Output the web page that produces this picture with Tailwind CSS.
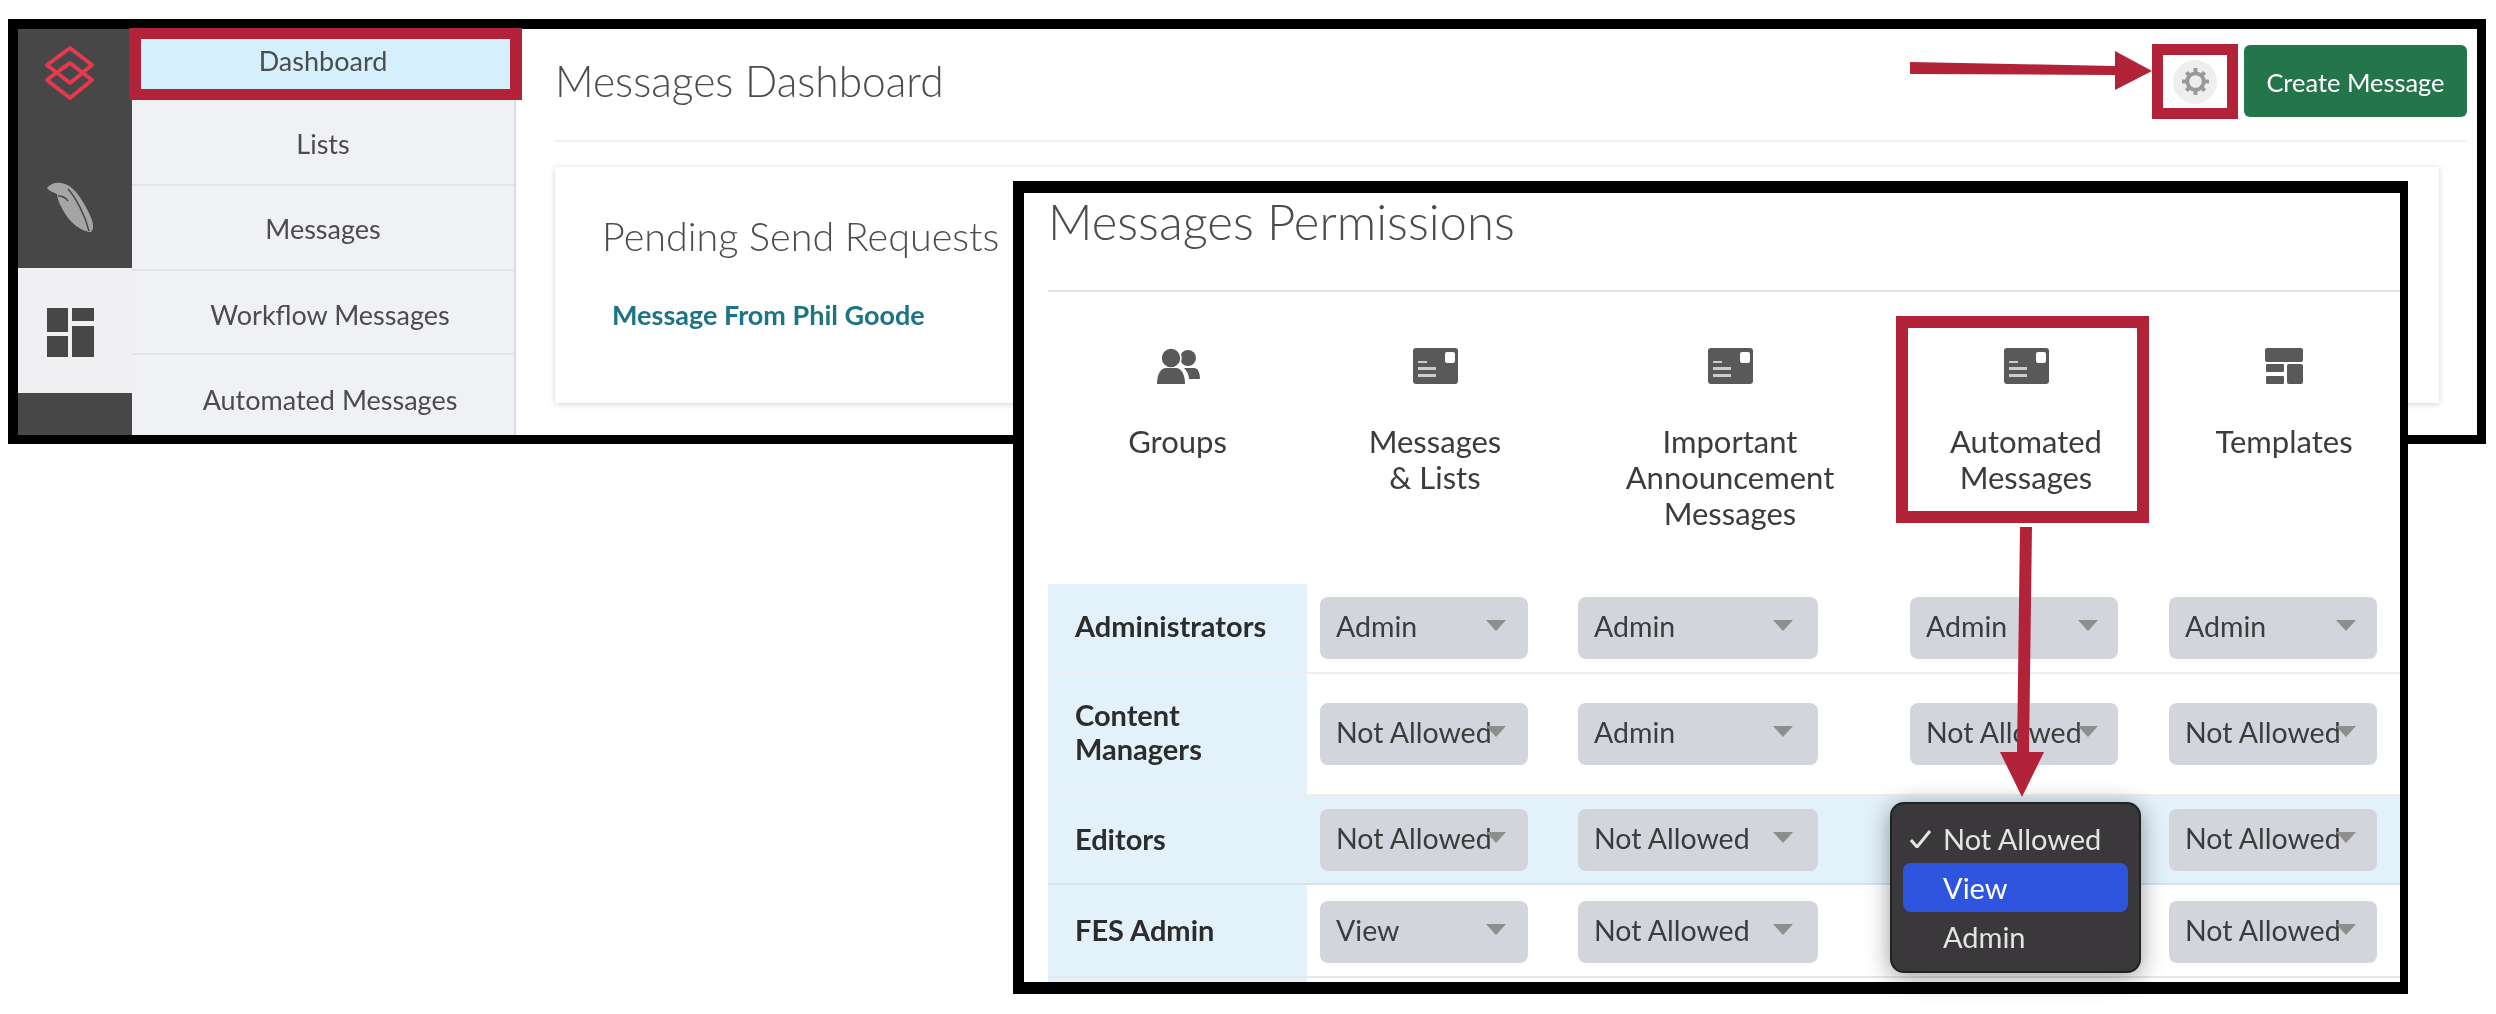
<!DOCTYPE html>
<html lang="en">
<head>
  <meta charset="UTF-8" />
  <title>Messages Dashboard</title>
  <script src="https://cdn.jsdelivr.net/npm/@tailwindcss/browser@4"></script>
</head>
<body class="bg-white">
  <div class="relative w-[2496px] h-[1014px] overflow-hidden bg-white blur-[0.7px] font-['Lato','Liberation_Sans',sans-serif] text-[#3c3c3c]">

    <!-- dashboard screenshot -->
    <div class="absolute left-[8px] top-[19px] w-[2478px] h-[425px] flex border-l-[10px] border-r-[9px] border-t-[10px] border-b-[9px] border-black bg-white">
      <!-- icon rail -->
      <div class="w-[114px] shrink-0 flex flex-col bg-[#474747]">
        <div class="h-[239px] relative">
          <svg class="absolute left-0 top-0" width="114" height="239" viewBox="18 29 114 239" fill="none">
            <path d="M82 73L92 65L70 48L47 65L70 83L80 75" stroke="#e8384f" stroke-width="4" stroke-linejoin="round" stroke-linecap="round"/>
            <path d="M57 72L47 80L70 98L92 80L70 63L60 70" stroke="#e8384f" stroke-width="4" stroke-linejoin="round" stroke-linecap="round"/>
            <path d="M47 188C50 184 55 182 61 183C70 184 77 192 83 202C89 212 94 222 93 228C92 232 90 233 89 232C80 230 72 224 66 215C60 206 57 198 57 194C53 192 49 191 47 188Z" fill="#a5a5a5"/>
            <path d="M68 189C76 198 85 215 89 231" stroke="#474747" stroke-width="1.5"/>
            <path d="M58 196C62 196 66 198 68 201" stroke="#474747" stroke-width="1.5"/>
          </svg>
        </div>
        <div class="h-[125px] bg-[#f0f0f3] relative">
          <svg class="absolute left-0 top-0" width="114" height="125" viewBox="18 268 114 125" fill="#474747">
            <rect x="47" y="308" width="21" height="24"/>
            <rect x="72" y="308" width="22" height="13"/>
            <rect x="47" y="336" width="21" height="21"/>
            <rect x="72" y="326" width="22" height="31"/>
          </svg>
        </div>
        <div class="flex-1"></div>
      </div>
      <!-- nav -->
      <div class="w-[384px] shrink-0 flex flex-col bg-[#f0f1f4] border-r-2 border-[#d8dce6] text-[27px] text-[#4c4c4c] text-center overflow-hidden">
        <div class="h-[70px] pb-[5px] flex items-center justify-center">Dashboard</div>
        <div class="h-[87px] pt-[6px] flex items-center justify-center border-b-2 border-[#e1e4ea]">Lists</div>
        <div class="h-[85px] pt-[4px] flex items-center justify-center border-b-2 border-[#e1e4ea]">Messages</div>
        <div class="h-[84px] pt-[6px] flex items-center justify-center pl-[14px] border-b-2 border-[#e1e4ea]">Workflow Messages</div>
        <div class="h-[80px] pt-[10px] flex items-center justify-center pl-[14px]">Automated Messages</div>
      </div>
      <!-- main -->
      <div class="flex-1 pl-[39px] pr-[10px]">
        <div class="h-[113px] flex items-start justify-between border-b-2 border-[#eeeff3]">
          <h1 class="mt-[28px] text-[42.5px] leading-[48px] font-light text-[#4c4c4c]">Messages Dashboard</h1>
          <button class="mt-[16px] pt-[2px] w-[223px] h-[72px] rounded-md bg-[#24744c] text-white text-[25.4px]">Create Message</button>
        </div>
        <div class="mt-[25px] mr-[28px] h-[236px] bg-white shadow-[0_1px_6px_rgba(0,0,0,0.18)] pl-[47px] pt-[47px]">
          <h2 class="text-[39.5px] leading-[44px] font-light text-[#4c4c4c]">Pending Send Requests</h2>
          <a class="block mt-[41px] ml-[10px] text-[27px] leading-[32px] font-bold text-[#1d7486]">Message From Phil Goode</a>
        </div>
      </div>
    </div>

    <!-- permissions screenshot -->
    <div class="absolute left-[1013px] top-[181px] w-[1395px] h-[813px] border-l-[11px] border-r-[8px] border-t-[12px] border-b-[12px] border-black bg-white pl-[24px] overflow-hidden">
      <div class="h-[99px] border-b-2 border-[#e2e2ea]">
        <h2 class="text-[49px] leading-[56px] font-light text-[#4c4c4c]">Messages Permissions</h2>
      </div>
      <!-- column heads -->
      <div class="h-[292px] flex pt-[56px] text-center text-[31px] leading-[36px]">
        <div class="w-[259px] shrink-0 flex flex-col items-center">
          <svg width="44" height="36" viewBox="0 0 44 36" fill="#595959">
            <circle cx="32" cy="10" r="8"/>
            <path d="M28 20H38C41 20 44 23 44 31H33C33 27 31 23 28 20Z"/>
            <circle cx="15" cy="10" r="10" stroke="#fff" stroke-width="1.5"/>
            <path d="M1 36C1 26 5 20 10 20H20C25 20 29 26 29 36Z"/>
          </svg>
          <div class="mt-[39px]">Groups</div>
        </div>
        <div class="w-[256px] shrink-0 flex flex-col items-center">
          <svg width="45" height="36" viewBox="0 0 45 36">
            <rect width="45" height="36" rx="3" fill="#595959"/>
            <rect x="32" y="4" width="10" height="11" rx="2" fill="#fff"/>
            <rect x="5" y="13" width="9" height="2" fill="#ccc"/>
            <rect x="5" y="19" width="18" height="3" fill="#ccc"/>
            <rect x="5" y="26" width="18" height="3" fill="#ccc"/>
          </svg>
          <div class="mt-[39px]">Messages<br />&amp; Lists</div>
        </div>
        <div class="w-[334px] shrink-0 flex flex-col items-center">
          <svg width="45" height="36" viewBox="0 0 45 36">
            <rect width="45" height="36" rx="3" fill="#595959"/>
            <rect x="32" y="4" width="10" height="11" rx="2" fill="#fff"/>
            <rect x="5" y="13" width="9" height="2" fill="#ccc"/>
            <rect x="5" y="19" width="18" height="3" fill="#ccc"/>
            <rect x="5" y="26" width="18" height="3" fill="#ccc"/>
          </svg>
          <div class="mt-[39px]">Important<br />Announcement<br />Messages</div>
        </div>
        <div class="w-[258px] shrink-0 flex flex-col items-center">
          <svg width="45" height="36" viewBox="0 0 45 36">
            <rect width="45" height="36" rx="3" fill="#595959"/>
            <rect x="32" y="4" width="10" height="11" rx="2" fill="#fff"/>
            <rect x="5" y="13" width="9" height="2" fill="#ccc"/>
            <rect x="5" y="19" width="18" height="3" fill="#ccc"/>
            <rect x="5" y="26" width="18" height="3" fill="#ccc"/>
          </svg>
          <div class="mt-[39px]">Automated<br />Messages</div>
        </div>
        <div class="w-[258px] shrink-0 flex flex-col items-center">
          <svg width="38" height="36" viewBox="0 0 38 36" fill="#595959">
            <rect width="38" height="14" rx="2"/>
            <rect x="1" y="16" width="18" height="8" rx="1"/>
            <rect x="1" y="28" width="18" height="8" rx="1"/>
            <rect x="22" y="16" width="16" height="20" rx="2"/>
          </svg>
          <div class="mt-[39px]">Templates</div>
        </div>
      </div>

      <!-- rows -->
      <div class="h-[90px] flex items-center border-b-2 border-[#eeeeee]">
        <div class="w-[259px] h-full shrink-0 flex items-center pb-[4px] pl-[27px] pr-4 bg-[#e3f1fb] text-[29px] leading-[34px] font-bold text-[#2c2c2c]">Administrators</div>
        <div class="relative ml-[13px] w-[208px] h-[62px] shrink-0 flex items-center pb-[4px] pl-[16px] rounded-lg bg-[#d3d5dd] text-[28.5px]">Admin<svg class="absolute right-[22px] top-[23px]" width="20" height="11" viewBox="0 0 20 11"><path d="M0 0H20L10 11Z" fill="#8e8e8e"/></svg></div>
        <div class="relative ml-[50px] w-[240px] h-[62px] shrink-0 flex items-center pb-[4px] pl-[16px] rounded-lg bg-[#d3d5dd] text-[28.5px]">Admin<svg class="absolute right-[25px] top-[23px]" width="20" height="11" viewBox="0 0 20 11"><path d="M0 0H20L10 11Z" fill="#8e8e8e"/></svg></div>
        <div class="relative ml-[92px] w-[208px] h-[62px] shrink-0 flex items-center pb-[4px] pl-[16px] rounded-lg bg-[#d3d5dd] text-[28.5px]">Admin<svg class="absolute right-[20px] top-[23px]" width="20" height="11" viewBox="0 0 20 11"><path d="M0 0H20L10 11Z" fill="#8e8e8e"/></svg></div>
        <div class="relative ml-[51px] w-[208px] h-[62px] shrink-0 flex items-center pb-[4px] pl-[16px] rounded-lg bg-[#d3d5dd] text-[28.5px]">Admin<svg class="absolute right-[21px] top-[23px]" width="20" height="11" viewBox="0 0 20 11"><path d="M0 0H20L10 11Z" fill="#8e8e8e"/></svg></div>
      </div>
      <div class="h-[122px] flex items-center border-b-2 border-[#eeeeee]">
        <div class="w-[259px] h-full shrink-0 flex items-center pb-[4px] pl-[27px] pr-4 bg-[#e3f1fb] text-[29px] leading-[34px] font-bold text-[#2c2c2c]">Content<br />Managers</div>
        <div class="relative ml-[13px] w-[208px] h-[62px] shrink-0 flex items-center pb-[4px] pl-[16px] rounded-lg bg-[#d3d5dd] text-[28.5px]">Not Allowed<svg class="absolute right-[22px] top-[23px]" width="20" height="11" viewBox="0 0 20 11"><path d="M0 0H20L10 11Z" fill="#8e8e8e"/></svg></div>
        <div class="relative ml-[50px] w-[240px] h-[62px] shrink-0 flex items-center pb-[4px] pl-[16px] rounded-lg bg-[#d3d5dd] text-[28.5px]">Admin<svg class="absolute right-[25px] top-[23px]" width="20" height="11" viewBox="0 0 20 11"><path d="M0 0H20L10 11Z" fill="#8e8e8e"/></svg></div>
        <div class="relative ml-[92px] w-[208px] h-[62px] shrink-0 flex items-center pb-[4px] pl-[16px] rounded-lg bg-[#d3d5dd] text-[28.5px]">Not Allowed<svg class="absolute right-[20px] top-[23px]" width="20" height="11" viewBox="0 0 20 11"><path d="M0 0H20L10 11Z" fill="#8e8e8e"/></svg></div>
        <div class="relative ml-[51px] w-[208px] h-[62px] shrink-0 flex items-center pb-[4px] pl-[16px] rounded-lg bg-[#d3d5dd] text-[28.5px]">Not Allowed<svg class="absolute right-[21px] top-[23px]" width="20" height="11" viewBox="0 0 20 11"><path d="M0 0H20L10 11Z" fill="#8e8e8e"/></svg></div>
      </div>
      <div class="h-[89px] flex items-center border-b-2 border-[#d5e3ee] bg-[#e3f1fb]">
        <div class="w-[259px] h-full shrink-0 flex items-center pb-[2px] pl-[27px] pr-4 text-[29px] leading-[34px] font-bold text-[#2c2c2c]">Editors</div>
        <div class="relative ml-[13px] w-[208px] h-[62px] shrink-0 flex items-center pb-[2px] pl-[16px] rounded-lg bg-[#d3d5dd] text-[28.5px]">Not Allowed<svg class="absolute right-[22px] top-[23px]" width="20" height="11" viewBox="0 0 20 11"><path d="M0 0H20L10 11Z" fill="#8e8e8e"/></svg></div>
        <div class="relative ml-[50px] w-[240px] h-[62px] shrink-0 flex items-center pb-[2px] pl-[16px] rounded-lg bg-[#d3d5dd] text-[28.5px]">Not Allowed<svg class="absolute right-[25px] top-[23px]" width="20" height="11" viewBox="0 0 20 11"><path d="M0 0H20L10 11Z" fill="#8e8e8e"/></svg></div>
        <div class="ml-[92px] w-[208px] h-[62px] shrink-0"></div>
        <div class="relative ml-[51px] w-[208px] h-[62px] shrink-0 flex items-center pb-[2px] pl-[16px] rounded-lg bg-[#d3d5dd] text-[28.5px]">Not Allowed<svg class="absolute right-[21px] top-[23px]" width="20" height="11" viewBox="0 0 20 11"><path d="M0 0H20L10 11Z" fill="#8e8e8e"/></svg></div>
      </div>
      <div class="h-[93px] flex items-center pt-[3px] border-b-2 border-[#e6e6ea]">
        <div class="w-[259px] h-[91px] -mt-[3px] shrink-0 flex items-center pb-[2px] pl-[27px] pr-4 bg-[#e3f1fb] text-[29px] leading-[34px] font-bold text-[#2c2c2c]">FES Admin</div>
        <div class="relative ml-[13px] w-[208px] h-[62px] shrink-0 flex items-center pb-[4px] pl-[16px] rounded-lg bg-[#d3d5dd] text-[28.5px]">View<svg class="absolute right-[22px] top-[23px]" width="20" height="11" viewBox="0 0 20 11"><path d="M0 0H20L10 11Z" fill="#8e8e8e"/></svg></div>
        <div class="relative ml-[50px] w-[240px] h-[62px] shrink-0 flex items-center pb-[4px] pl-[16px] rounded-lg bg-[#d3d5dd] text-[28.5px]">Not Allowed<svg class="absolute right-[25px] top-[23px]" width="20" height="11" viewBox="0 0 20 11"><path d="M0 0H20L10 11Z" fill="#8e8e8e"/></svg></div>
        <div class="ml-[92px] w-[208px] h-[62px] shrink-0"></div>
        <div class="relative ml-[51px] w-[208px] h-[62px] shrink-0 flex items-center pb-[4px] pl-[16px] rounded-lg bg-[#d3d5dd] text-[28.5px]">Not Allowed<svg class="absolute right-[21px] top-[23px]" width="20" height="11" viewBox="0 0 20 11"><path d="M0 0H20L10 11Z" fill="#8e8e8e"/></svg></div>
      </div>
      <div class="w-[259px] h-[4px] bg-[#e3f1fb]"></div>
    </div>

    <!-- native select popup -->
    <div class="absolute left-[1890px] top-[802px] w-[251px] h-[171px] rounded-[14px] bg-[#3a383a] border-2 border-[#222] shadow-[0_4px_24px_rgba(0,0,0,0.4)] text-[29px] text-[#e4e4e4] px-[11px] pt-[11px]">
      <div class="h-[48px] flex items-center"><span class="w-[40px] pl-[7px]"><svg width="21" height="18" viewBox="0 0 21 18" fill="none"><path d="M1 10L7 17L20 1" stroke="#e4e4e4" stroke-width="3"/></svg></span>Not Allowed</div>
      <div class="h-[49px] flex items-center rounded-lg bg-[#2f55de] text-white"><span class="w-[40px]"></span>View</div>
      <div class="h-[49px] flex items-center"><span class="w-[40px]"></span>Admin</div>
    </div>

    <!-- red call-outs -->
    <div class="absolute left-[129px] top-[28px] w-[393px] h-[72px] border-x-[12px] border-y-[11px] border-[#b22339] bg-[#d6effc] flex items-start justify-center text-[27px] leading-[44px] text-[#4c4c4c]"><span class="pr-[5px]">Dashboard</span></div>
    <div class="absolute left-[2152px] top-[44px] w-[86px] h-[75px] border-[11px] border-[#b22339] bg-white flex items-center justify-center">
      <div class="w-[44px] h-[44px] rounded-full bg-[#eeeeef] flex items-center justify-center">
        <svg width="27" height="27" viewBox="0 0 28 28">
          <circle cx="14" cy="14" r="8.5" fill="none" stroke="#999999" stroke-width="4"/>
          <path d="M12 0H16V5H12ZM12 23H16V28H12ZM0 12H5V16H0ZM23 12H28V16H23ZM3 6L6 3L9 6L6 9ZM19 22L22 19L25 22L22 25ZM3 22L6 19L9 22L6 25ZM19 6L22 3L25 6L22 9Z" fill="#999999"/>
        </svg>
      </div>
    </div>
    <div class="absolute left-[1896px] top-[316px] w-[253px] h-[207px] border-[12px] border-[#b22339]"></div>
    <svg class="absolute left-0 top-0 pointer-events-none" width="2496" height="1014" fill="#b22339">
      <path d="M1910 62L2115 66V51L2152 71L2115 90V75L1910 74Z"/>
      <path d="M2020 527H2032L2029 752H2044L2022 797L2000 752H2017Z"/>
    </svg>
  </div>
</body>
</html>
